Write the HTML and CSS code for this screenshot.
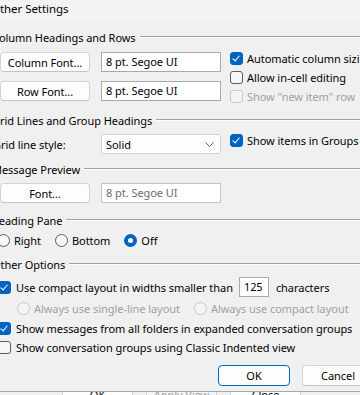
FILE: index.html
```html
<!DOCTYPE html>
<html>
<head>
<meta charset="utf-8">
<link rel="stylesheet" href="styles.css">
</head>
<body>
<div class="titlebar"><span class="title">Other Settings</span></div>
<div class="dlg">
  <div class="hdr h1"><span>Column Headings and Rows</span><i></i></div>
  <div class="gbody b1">
    <div class="fields">
      <div class="frow"><div class="btn">Column Font...</div><div class="tb">8 pt. Segoe UI</div></div>
      <div class="frow r2"><div class="btn">Row Font...</div><div class="tb">8 pt. Segoe UI</div></div>
    </div>
    <div class="checks">
      <div class="opt"><span class="cb on"></span><span>Automatic column sizing</span></div>
      <div class="opt"><span class="cb"></span><span>Allow in-cell editing</span></div>
      <div class="opt dis"><span class="cb"></span><span>Show "new item" row</span></div>
    </div>
  </div>

  <div class="hdr h2"><span>Grid Lines and Group Headings</span><i></i></div>
  <div class="gbody b2">
    <div class="frow">
      <div class="lbl">Grid line style:</div>
      <div class="sel"><span>Solid</span><svg width="9" height="5" viewBox="0 0 9 5"><path d="M0.5 0.5 L4.5 4.5 L8.5 0.5" fill="none" stroke="#606060" stroke-width="1"/></svg></div>
    </div>
    <div class="checks">
      <div class="opt"><span class="cb on"></span><span>Show items in Groups</span></div>
    </div>
  </div>

  <div class="hdr h3"><span>Message Preview</span><i></i></div>
  <div class="gbody b3">
    <div class="frow"><div class="btn">Font...</div><div class="tb dtb">8 pt. Segoe UI</div></div>
  </div>

  <div class="hdr h4"><span>Reading Pane</span><i></i></div>
  <div class="radios">
    <div class="opt r-right"><span class="rb"></span><span>Right</span></div>
    <div class="opt r-bottom"><span class="rb"></span><span>Bottom</span></div>
    <div class="opt r-off"><span class="rb on"></span><span>Off</span></div>
  </div>

  <div class="hdr h5"><span>Other Options</span><i></i></div>
  <div class="opt compact"><span class="cb on"></span><span>Use compact layout in widths smaller than</span><span class="num">125</span><span class="chars">characters</span></div>
  <div class="subradios">
    <div class="opt dis s1"><span class="rb"></span><span>Always use single-line layout</span></div>
    <div class="opt dis s2"><span class="rb"></span><span>Always use compact layout</span></div>
  </div>
  <div class="opt line c1"><span class="cb on"></span><span>Show messages from all folders in expanded conversation groups</span></div>
  <div class="opt line c2"><span class="cb"></span><span>Show conversation groups using Classic Indented view</span></div>

  <div class="actions">
    <div class="btn ok">OK</div>
    <div class="btn cancel">Cancel</div>
  </div>
</div>
<div class="parent">
  <div class="pbtn">OK</div>
  <div class="pbtn pdis">Apply View</div>
  <div class="pbtn">Close</div>
</div>
</body>
</html>
```
FILE: styles.css
```css
html, body {
  margin: 0;
  padding: 0;
  width: 360px;
  height: 395px;
  overflow: hidden;
  background: #f0f0f0;
  font-family: "Noto Sans", "Open Sans", sans-serif;
  font-size: 11px;
  letter-spacing: -0.05px;
  color: #000;
}

.titlebar {
  height: 22px;
  background: #f3f3f3;
  position: relative;
}
.title {
  position: absolute;
  left: -9px;
  top: 0;
  line-height: 17px;
  font-size: 11.5px;
}

.dlg {
  margin-left: -8px;
  width: 420px;
  border-bottom: 1px solid #a8a8a8;
}

.hdr {
  display: flex;
  align-items: center;
  height: 16px;
  white-space: nowrap;
}
.hdr i {
  flex: 1;
  margin-left: 4px;
  border-top: 1px solid #a0a0a0;
  border-bottom: 1px solid #ffffff;
}
.h1 { margin-top: 7px; }
.h2 { margin-top: 9px; }
.h3 { margin-top: 7px; }
.h4 { margin-top: 9px; }
.h5 { margin-top: 9px; }

.gbody {
  display: flex;
  align-items: flex-start;
}
.b1 { margin-top: 7px; }
.b2 { margin-top: 6px; }
.b3 { margin-top: 6px; }

.fields { display: flex; flex-direction: column; }
.frow {
  display: flex;
  align-items: center;
  height: 20px;
}
.r2 { margin-top: 9px; }

.btn {
  box-sizing: border-box;
  height: 20px;
  background: #fdfdfd;
  border: 1px solid #d3d3d3;
  border-bottom-color: #c4c4c4;
  border-radius: 4px;
  display: flex;
  align-items: center;
  justify-content: center;
  white-space: nowrap;
}
.fields .btn, .b3 .btn {
  margin-left: 8px;
  width: 90px;
}
.tb {
  box-sizing: border-box;
  margin-left: 11px;
  width: 120px;
  height: 20px;
  background: #fff;
  border: 1px solid #a9a9a9;
  padding-left: 4px;
  line-height: 18px;
  white-space: nowrap;
}
.dtb { color: #6d6d6d; border-color: #c4c4c4; }

.lbl {
  margin-left: 1px;
  width: 108px;
  white-space: nowrap;
}
.sel {
  box-sizing: border-box;
  width: 120px;
  height: 20px;
  background: #fdfdfd;
  border: 1px solid #d3d3d3;
  border-radius: 3px;
  display: flex;
  align-items: center;
  justify-content: space-between;
  padding: 0 6px 0 4px;
}

.checks {
  margin-left: 9px;
  display: flex;
  flex-direction: column;
  gap: 6px;
}

.opt {
  display: flex;
  align-items: center;
  height: 13px;
  white-space: nowrap;
}
.opt .cb, .opt .rb { margin-right: 4px; flex: none; }
.dis { color: #a0a0a0; }

.cb {
  box-sizing: border-box;
  width: 13px;
  height: 13px;
  border: 1px solid #5c5c5c;
  border-radius: 3px;
  background: #f7f7f7;
  position: relative;
}
.dis .cb { border-color: #c8c8c8; background: #f4f4f4; }
.cb.on {
  background: #0063c4;
  border-color: #0063c4;
}
.cb.on::after {
  content: "";
  position: absolute;
  left: 3px;
  top: 1px;
  width: 3px;
  height: 6px;
  border-right: 1.3px solid #fff;
  border-bottom: 1.3px solid #fff;
  transform: rotate(40deg);
}

.rb {
  box-sizing: border-box;
  width: 13px;
  height: 13px;
  border: 1px solid #5c5c5c;
  border-radius: 50%;
  background: #f7f7f7;
}
.dis .rb { border-color: #c8c8c8; background: #f4f4f4; }
.rb.on {
  background: #fff;
  border: 4px solid #0063c4;
}

.radios {
  display: flex;
  margin-top: 6px;
}
.r-right { margin-left: 5px; }
.r-bottom { margin-left: 14px; }
.r-off { margin-left: 14px; }

.compact {
  margin-top: 5px;
  height: 20px;
  padding-left: 6px;
}
.compact .cb { margin-right: 5px; }
.num {
  box-sizing: border-box;
  margin-left: 6px;
  width: 30px;
  height: 20px;
  background: #fff;
  border: 1px solid #a9a9a9;
  padding-left: 4px;
  line-height: 18px;
}
.chars { margin-left: 7px; }

.subradios {
  display: flex;
  margin-top: 5px;
}
.s1 { margin-left: 25px; }
.s2 { margin-left: 14px; }

.line { padding-left: 6px; }
.line .cb { margin-right: 5px; }
.c1 { margin-top: 7px; }
.c2 { margin-top: 6px; }

.actions {
  display: flex;
  margin-top: 11px;
  margin-bottom: 5px;
  padding-left: 226px;
}
.actions .btn {
  width: 72px;
  height: 21px;
}
.ok { border: 1px solid #0067c0; }
.cancel { margin-left: 12px; }

.parent {
  display: flex;
  height: 5px;
  overflow: hidden;
  padding-left: 62px;
  gap: 13px;
}
.pbtn {
  box-sizing: border-box;
  flex: none;
  width: 71px;
  height: 22px;
  margin-top: -8px;
  background: #fdfdfd;
  border: 1px solid #d3d3d3;
  text-align: center;
  line-height: 20px;
}
.pdis { color: #a0a0a0; background: #f5f5f5; }
```
